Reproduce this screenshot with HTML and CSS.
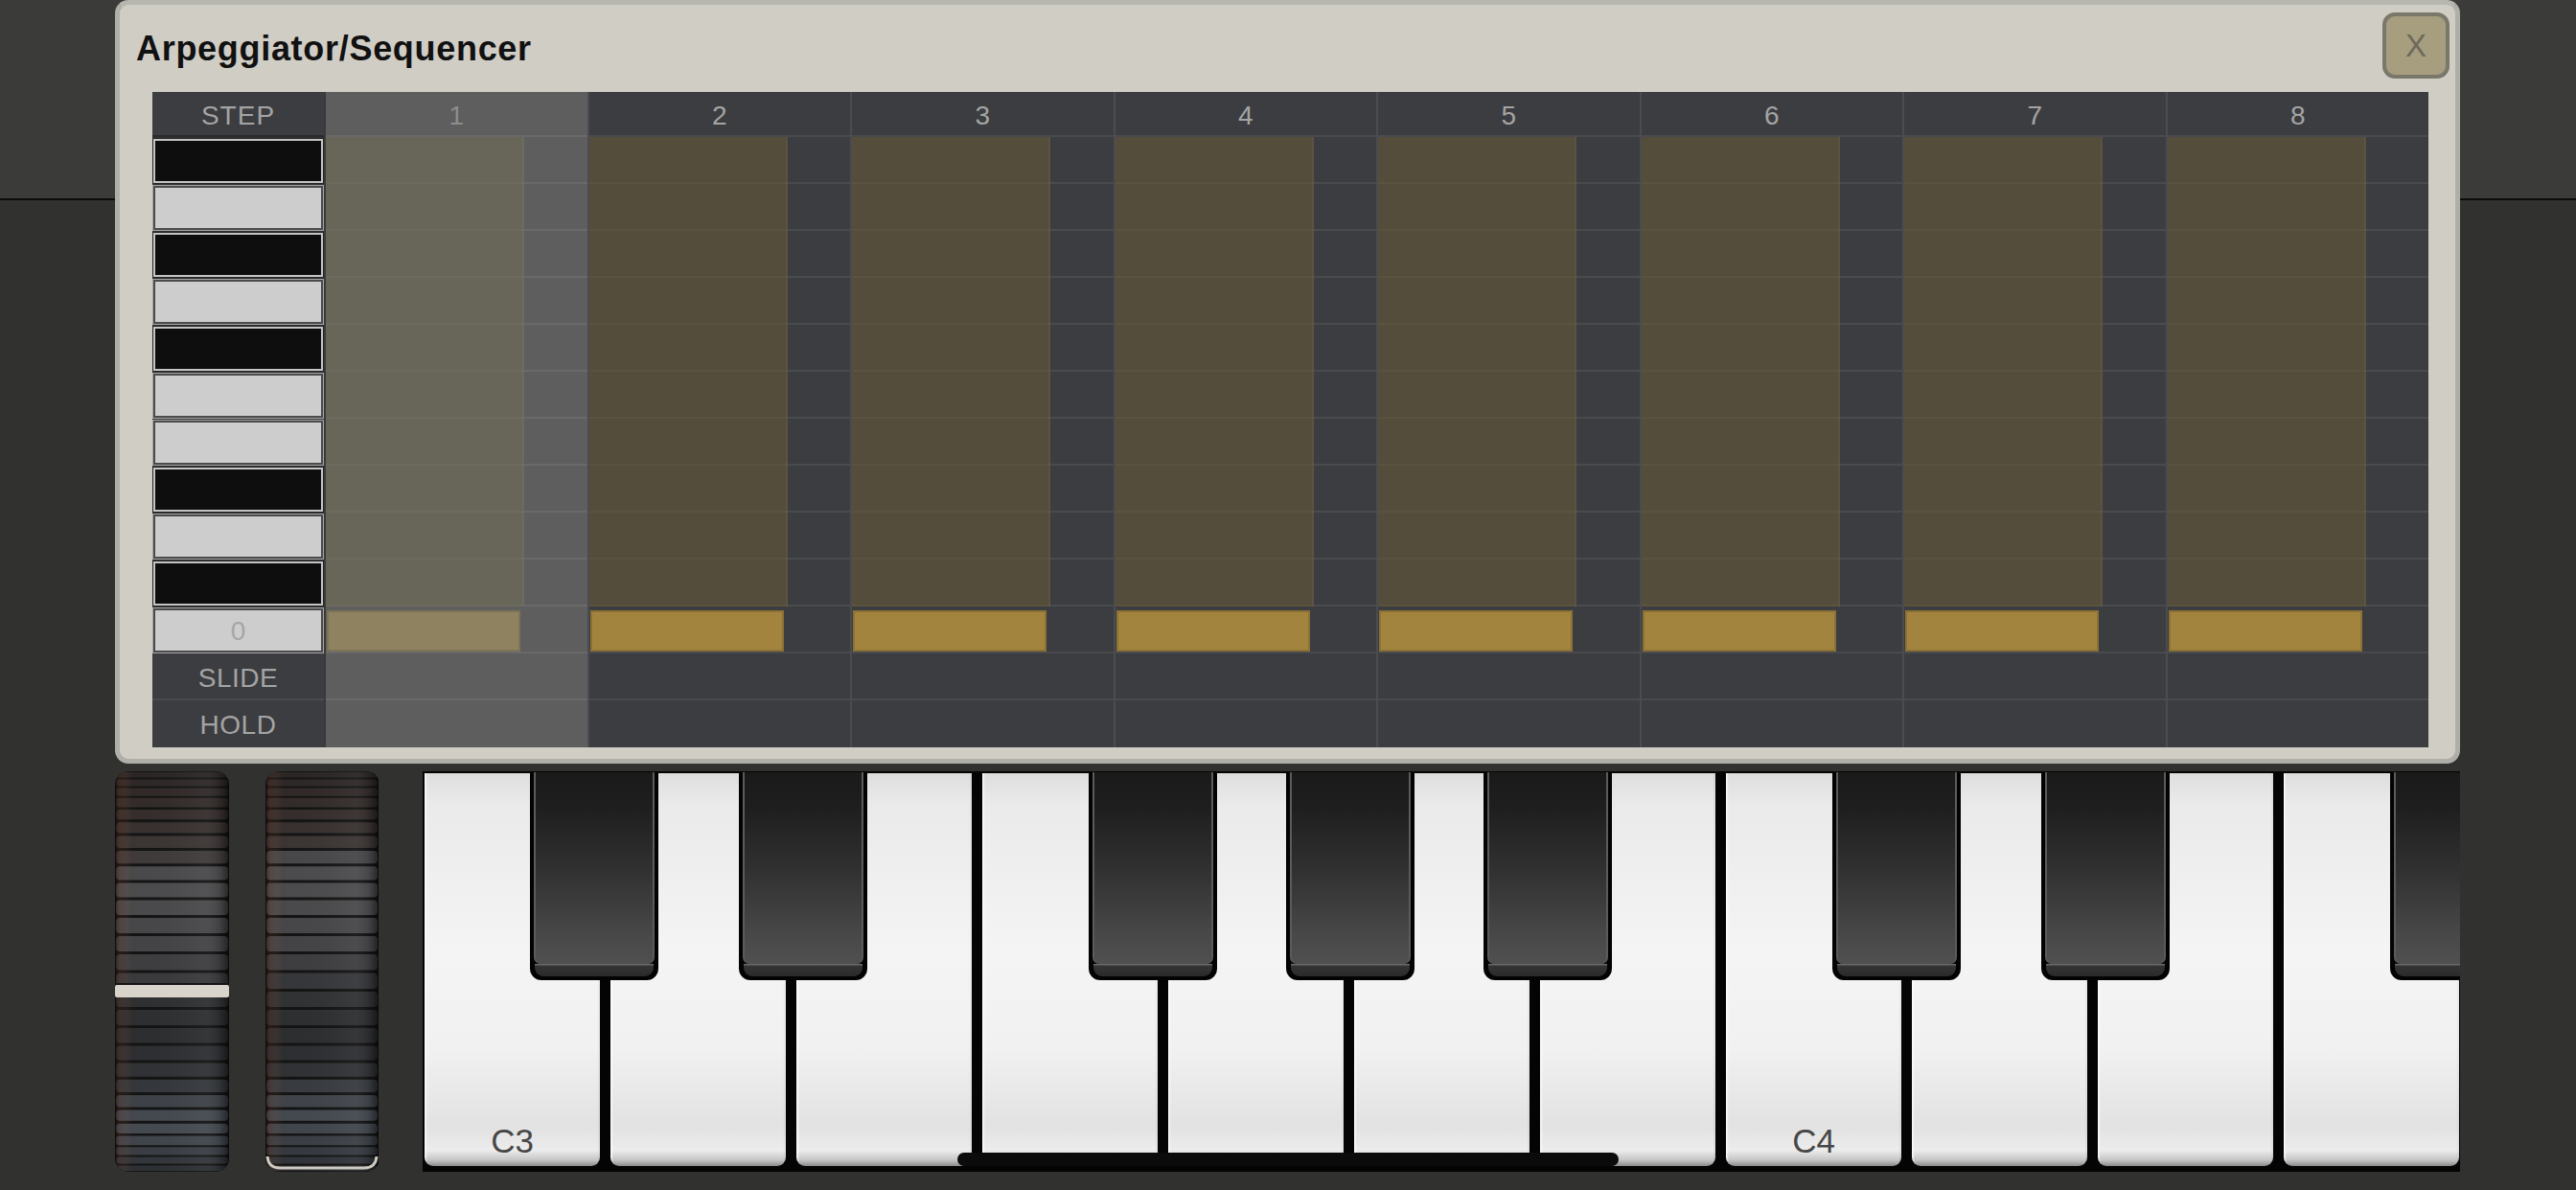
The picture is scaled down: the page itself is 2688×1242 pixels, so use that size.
FILE: index.html
```html
<!DOCTYPE html>
<html lang="en">
<head>
<meta charset="utf-8">
<title>Arpeggiator/Sequencer</title>
<link rel="stylesheet" href="styles.css">
</head>
<body>
<div class="app">
  <section class="dialog">
    <header class="dlg-head">
      <h1 class="dlg-title">Arpeggiator/Sequencer</h1>
      <button class="close" type="button">X</button>
    </header>
    <div class="grid">
      <div class="labels">
        <div class="lh">STEP</div>
        <div class="lk kb"></div>
        <div class="lk kw"></div>
        <div class="lk kb"></div>
        <div class="lk kw"></div>
        <div class="lk kb"></div>
        <div class="lk kw"></div>
        <div class="lk kw"></div>
        <div class="lk kb"></div>
        <div class="lk kw"></div>
        <div class="lk kb"></div>
        <div class="lk kw zero">0</div>
        <div class="ll">SLIDE</div>
        <div class="ll last">HOLD</div>
      </div>
      <div class="step cur">
        <div class="hd">1</div>
        <div class="notes"><div class="gate"></div></div>
        <div class="val"><div class="bar"></div></div>
        <div class="opt"></div>
        <div class="opt last"></div>
      </div>
      <div class="step">
        <div class="hd">2</div>
        <div class="notes"><div class="gate"></div></div>
        <div class="val"><div class="bar"></div></div>
        <div class="opt"></div>
        <div class="opt last"></div>
      </div>
      <div class="step">
        <div class="hd">3</div>
        <div class="notes"><div class="gate"></div></div>
        <div class="val"><div class="bar"></div></div>
        <div class="opt"></div>
        <div class="opt last"></div>
      </div>
      <div class="step">
        <div class="hd">4</div>
        <div class="notes"><div class="gate"></div></div>
        <div class="val"><div class="bar"></div></div>
        <div class="opt"></div>
        <div class="opt last"></div>
      </div>
      <div class="step">
        <div class="hd">5</div>
        <div class="notes"><div class="gate"></div></div>
        <div class="val"><div class="bar"></div></div>
        <div class="opt"></div>
        <div class="opt last"></div>
      </div>
      <div class="step">
        <div class="hd">6</div>
        <div class="notes"><div class="gate"></div></div>
        <div class="val"><div class="bar"></div></div>
        <div class="opt"></div>
        <div class="opt last"></div>
      </div>
      <div class="step">
        <div class="hd">7</div>
        <div class="notes"><div class="gate"></div></div>
        <div class="val"><div class="bar"></div></div>
        <div class="opt"></div>
        <div class="opt last"></div>
      </div>
      <div class="step">
        <div class="hd">8</div>
        <div class="notes"><div class="gate"></div></div>
        <div class="val"><div class="bar"></div></div>
        <div class="opt"></div>
        <div class="opt last"></div>
      </div>
    </div>
  </section>

  <div class="controls">
    <div class="wheel">
      <svg width="119" height="418" viewBox="0 0 119 418">
        <defs>
          <clipPath id="wclip"><rect x="0" y="0" width="119" height="418" rx="14"/></clipPath>
          <linearGradient id="wshade" x1="0" y1="0" x2="1" y2="0">
            <stop offset="0" stop-color="#000" stop-opacity="0.5"/>
            <stop offset="0.04" stop-color="#6a3420" stop-opacity="0.22"/>
            <stop offset="0.11" stop-color="#8a5a40" stop-opacity="0.1"/>
            <stop offset="0.2" stop-color="#000" stop-opacity="0"/>
            <stop offset="0.78" stop-color="#fff" stop-opacity="0.04"/>
            <stop offset="0.92" stop-color="#000" stop-opacity="0.1"/>
            <stop offset="1" stop-color="#000" stop-opacity="0.5"/>
          </linearGradient>
        </defs>
        <g clip-path="url(#wclip)">
          <rect x="0" y="0" width="119" height="418" fill="#141414"/>
          <rect x="1" y="1" width="117" height="5.4" rx="3" fill="#2c2626"/>
          <rect x="1" y="8.4" width="117" height="7" rx="3" fill="#2f2828"/>
          <rect x="1" y="17.4" width="117" height="8.4" rx="3" fill="#312a29"/>
          <rect x="1" y="27.8" width="117" height="9.8" rx="3" fill="#332c2b"/>
          <rect x="1" y="40.1" width="117" height="10.1" rx="4" fill="#352e2d"/>
          <rect x="1" y="53.2" width="117" height="11.3" rx="4" fill="#383130"/>
          <rect x="1" y="67.5" width="117" height="12.4" rx="4" fill="#3b3534"/>
          <rect x="1" y="82.9" width="117" height="13.4" rx="4" fill="#403b3b"/>
          <rect x="1" y="99.3" width="117" height="14.2" rx="4" fill="#4a4a4c"/>
          <rect x="1" y="116.5" width="117" height="14.9" rx="4" fill="#4c4c4e"/>
          <rect x="1" y="134.4" width="117" height="15.5" rx="4" fill="#4a4a4c"/>
          <rect x="1" y="152.9" width="117" height="16" rx="4" fill="#47474a"/>
          <rect x="1" y="171.9" width="117" height="16.2" rx="4" fill="#444447"/>
          <rect x="1" y="191.1" width="117" height="16.4" rx="4" fill="#3e3e41"/>
          <rect x="1" y="210.5" width="117" height="16.4" rx="4" fill="#3a3a3d"/>
          <rect x="1" y="229.9" width="117" height="16.2" rx="4" fill="#2f3032"/>
          <rect x="1" y="249.1" width="117" height="16" rx="4" fill="#2e2f31"/>
          <rect x="1" y="268.1" width="117" height="15.5" rx="4" fill="#2d2e30"/>
          <rect x="1" y="286.6" width="117" height="14.9" rx="4" fill="#2e2f32"/>
          <rect x="1" y="304.5" width="117" height="14.2" rx="4" fill="#303235"/>
          <rect x="1" y="321.7" width="117" height="13.4" rx="4" fill="#34373b"/>
          <rect x="1" y="338.1" width="117" height="12.4" rx="4" fill="#3e4248"/>
          <rect x="1" y="353.5" width="117" height="11.3" rx="4" fill="#444950"/>
          <rect x="1" y="367.8" width="117" height="10.1" rx="4" fill="#454a51"/>
          <rect x="1" y="380.4" width="117" height="9.8" rx="3" fill="#40454c"/>
          <rect x="1" y="392.2" width="117" height="8.4" rx="3" fill="#3a3e44"/>
          <rect x="1" y="402.6" width="117" height="7" rx="3" fill="#33363b"/>
          <rect x="1" y="411.6" width="117" height="5.4" rx="3" fill="#2d3034"/>
          <rect x="0" y="0" width="119" height="418" fill="url(#wshade)"/>
          <rect x="0" y="221" width="119" height="3" fill="#151515"/>
          <rect x="0" y="223" width="119" height="13" rx="2" fill="#d8d4cc"/>
        </g>
      </svg>
    </div>
    <div class="wheel wheel2">
      <svg width="118" height="418" viewBox="0 0 118 418">
        <g clip-path="url(#wclip)">
          <rect x="0" y="0" width="118" height="418" fill="#141414"/>
          <rect x="1" y="1" width="116" height="5.4" rx="3" fill="#2c2626"/>
          <rect x="1" y="8.4" width="116" height="7" rx="3" fill="#2f2828"/>
          <rect x="1" y="17.4" width="116" height="8.4" rx="3" fill="#312a29"/>
          <rect x="1" y="27.8" width="116" height="9.8" rx="3" fill="#332c2b"/>
          <rect x="1" y="40.1" width="116" height="10.1" rx="4" fill="#352e2d"/>
          <rect x="1" y="53.2" width="116" height="11.3" rx="4" fill="#383130"/>
          <rect x="1" y="67.5" width="116" height="12.4" rx="4" fill="#3b3534"/>
          <rect x="1" y="82.9" width="116" height="13.4" rx="4" fill="#48484a"/>
          <rect x="1" y="99.3" width="116" height="14.2" rx="4" fill="#4c4c4e"/>
          <rect x="1" y="116.5" width="116" height="14.9" rx="4" fill="#4c4c4e"/>
          <rect x="1" y="134.4" width="116" height="15.5" rx="4" fill="#4a4a4c"/>
          <rect x="1" y="152.9" width="116" height="16" rx="4" fill="#47474a"/>
          <rect x="1" y="171.9" width="116" height="16.2" rx="4" fill="#444447"/>
          <rect x="1" y="191.1" width="116" height="16.4" rx="4" fill="#3e3e41"/>
          <rect x="1" y="210.5" width="116" height="16.4" rx="4" fill="#36373a"/>
          <rect x="1" y="229.9" width="116" height="16.2" rx="4" fill="#313234"/>
          <rect x="1" y="249.1" width="116" height="16" rx="4" fill="#2e2f31"/>
          <rect x="1" y="268.1" width="116" height="15.5" rx="4" fill="#2d2e30"/>
          <rect x="1" y="286.6" width="116" height="14.9" rx="4" fill="#2e2f32"/>
          <rect x="1" y="304.5" width="116" height="14.2" rx="4" fill="#303235"/>
          <rect x="1" y="321.7" width="116" height="13.4" rx="4" fill="#383b40"/>
          <rect x="1" y="338.1" width="116" height="12.4" rx="4" fill="#40444a"/>
          <rect x="1" y="353.5" width="116" height="11.3" rx="4" fill="#444950"/>
          <rect x="1" y="367.8" width="116" height="10.1" rx="4" fill="#41464d"/>
          <rect x="1" y="380.4" width="116" height="9.8" rx="3" fill="#3b3f45"/>
          <rect x="1" y="392.2" width="116" height="8.4" rx="3" fill="#363a40"/>
          <rect x="1" y="402.6" width="116" height="7" rx="3" fill="#31343a"/>
          <rect x="1" y="411.6" width="116" height="5.4" rx="3" fill="#2b2e33"/>
          <rect x="0" y="0" width="118" height="418" fill="url(#wshade)"/>
          <path d="M2,402 Q3,414 15,414 L103,414 Q115,414 116,402" fill="none" stroke="#cfcac2" stroke-width="3"/>
        </g>
      </svg>
    </div>

    <div class="keyboard">
      <div class="wk"><span class="wk-label">C3</span></div>
      <div class="wk"></div>
      <div class="wk"></div>
      <div class="wk"></div>
      <div class="wk"></div>
      <div class="wk"></div>
      <div class="wk"></div>
      <div class="wk"><span class="wk-label">C4</span></div>
      <div class="wk"></div>
      <div class="wk"></div>
      <div class="wk"></div>
      <div class="bk k-cs"></div>
      <div class="bk k-ds"></div>
      <div class="bk k-fs"></div>
      <div class="bk k-gs"></div>
      <div class="bk k-as"></div>
      <div class="bk k-cs2"></div>
      <div class="bk k-ds2"></div>
      <div class="bk k-fs2"></div>
    </div>
  </div>
</div>
<div class="home-bar"></div>
</body>
</html>
```

FILE: styles.css
```css
html, body {
  margin: 0;
  padding: 0;
}

body {
  width: 2688px;
  height: 1242px;
  overflow: hidden;
  position: relative;
  font-family: "Liberation Sans", Arial, sans-serif;
  background: linear-gradient(to bottom, #3b3b3a 0, #3b3b3a 207px, #0c0c0c 207px, #0c0c0c 209px, #313130 209px, #313130 100%);
}

.app {
  display: flex;
  flex-direction: column;
  padding-left: 120px;
}

/* ---------- dialog ---------- */
.dialog {
  width: 2447px;
  height: 797px;
  box-sizing: border-box;
  background: #d0cdc5;
  border: 5px solid #b0afa7;
  border-top-color: #b8b7af;
  border-radius: 14px;
  display: flex;
  flex-direction: column;
}

.dlg-head {
  height: 91px;
  display: flex;
  align-items: flex-start;
  justify-content: space-between;
  padding: 0 6px 0 17px;
}

.dlg-title {
  margin: 0;
  margin-top: 25px;
  font-family: "Liberation Sans", Arial, sans-serif;
  font-size: 36px;
  font-weight: 700;
  line-height: 42px;
  color: #111;
  letter-spacing: 0.7px;
}

.close {
  margin-top: 8px;
  width: 70px;
  height: 69px;
  box-sizing: border-box;
  border: 4px solid #7a776b;
  border-radius: 13px;
  background: #a79e80;
  color: #6e6a5b;
  font-family: "Liberation Sans", Arial, sans-serif;
  font-size: 33px;
  line-height: 1;
  padding: 0;
  display: flex;
  align-items: center;
  justify-content: center;
}

.grid {
  margin: 0 27px 0 34px;
  width: 2375px;
  height: 684px;
  display: flex;
  background: #3c3d40;
  color: #a4a4a4;
  font-size: 28px;
}

/* label column */
.labels {
  width: 179px;
  flex: none;
  display: flex;
  flex-direction: column;
  background: #303133;
}

.lh, .ll {
  background: #3c3d40;
  text-align: center;
  box-sizing: border-box;
}

.lh {
  height: 47px;
  padding-top: 4px;
  line-height: 41px;
  border-bottom: 2px solid #2a2b2d;
  letter-spacing: 1px;
}

.ll {
  height: 49px;
  padding-top: 4px;
  line-height: 43px;
  border-bottom: 2px solid #4a4b4e;
  letter-spacing: 0.5px;
}

.ll.last {
  border-bottom: 0;
}

.lk {
  height: 46px;
  margin: 2px 1px 1px 1px;
  box-sizing: border-box;
}

.kb {
  background: #0e0e0e;
  border: 2px solid #c5c5c5;
  box-shadow: 0 0 0 1px #262626;
}

.kw {
  background: #cdcdcd;
  border: 2px solid #4b4b4b;
  box-shadow: 0 0 0 1px #a5a5a5;
}

.zero {
  text-align: center;
  color: #a6a6a6;
  padding-top: 4px;
  line-height: 36px;
}

/* step columns */
.step {
  flex: 1 1 0;
  min-width: 0;
  display: flex;
  flex-direction: column;
  border-left: 2px solid #4b4c4f;
  background: #3c3d40;
}

.step.cur {
  background: #5e5e5e;
  border-left-color: #3a3a3a;
  color: #8d8d8d;
}

.hd {
  height: 47px;
  box-sizing: border-box;
  padding-top: 4px;
  line-height: 41px;
  text-align: center;
  border-bottom: 2px solid rgba(255, 255, 255, 0.07);
}

.notes {
  height: 490px;
  display: flex;
  background-image: repeating-linear-gradient(to bottom, transparent 0, transparent 47px, rgba(255, 255, 255, 0.07) 47px, rgba(255, 255, 255, 0.07) 49px);
}

.gate {
  width: 205px;
  background: rgba(102, 89, 57, 0.6);
  border-right: 2px solid rgba(255, 255, 255, 0.04);
}

.cur .gate {
  background: rgba(112, 106, 86, 0.6);
}

.val {
  height: 49px;
  box-sizing: border-box;
  padding-top: 4px;
  border-bottom: 2px solid rgba(255, 255, 255, 0.07);
}

.bar {
  width: 202px;
  height: 43px;
  margin-left: 1px;
  box-sizing: border-box;
  background: #a2843f;
  border: 2px solid #8b7234;
}

.cur .bar {
  background: #8f8260;
  border-color: #7e7455;
}

.opt {
  height: 49px;
  box-sizing: border-box;
  border-bottom: 2px solid rgba(255, 255, 255, 0.07);
}

.opt.last {
  border-bottom: 0;
}

/* ---------- controls ---------- */
.controls {
  margin-top: 8px;
  height: 418px;
  display: flex;
}

.wheel {
  width: 119px;
  height: 418px;
  flex: none;
}

.wheel svg {
  display: block;
}

.wheel2 {
  width: 118px;
  margin-left: 38px;
}

.keyboard {
  position: relative;
  margin-left: 46px;
  width: 2126px;
  height: 418px;
  box-sizing: border-box;
  padding: 2px 0 6px 2px;
  background: #040404;
  display: flex;
  gap: 11px;
  overflow: hidden;
}

.wk {
  flex: 0 0 183px;
  height: 410px;
  box-sizing: border-box;
  border-radius: 0 0 9px 9px;
  background:
    linear-gradient(to right, rgba(255,255,255,0.9) 0, rgba(255,255,255,0) 3px, rgba(255,255,255,0) calc(100% - 3px), rgba(0,0,0,0.06) 100%),
    linear-gradient(to bottom, #dedede 0, #eaeaea 8%, #f4f4f4 45%, #f1f1f1 70%, #e2e2e2 90%, #ececec 96%, #c4c4c4 98.5%, #8a8a8a 100%);
  display: flex;
  align-items: flex-end;
  justify-content: center;
  padding-bottom: 9px;
}

.wk-label {
  font-family: "Liberation Sans", Arial, sans-serif;
  font-size: 35px;
  line-height: 1;
  color: #474747;
}

.bk {
  position: absolute;
  top: 1px;
  width: 134px;
  height: 217px;
  background: #030303;
  border-radius: 0 0 12px 12px;
}

.bk::before {
  content: "";
  position: absolute;
  left: 4px;
  right: 4px;
  top: 0;
  bottom: 17px;
  background: linear-gradient(to bottom, #1a1a1a 0, #1e1e1e 18%, #303030 50%, #484848 85%, #505050 100%);
  border-left: 2px solid #5b5b5b;
  border-right: 2px solid #5b5b5b;
  border-radius: 0 0 7px 7px;
}

.bk::after {
  content: "";
  position: absolute;
  left: 5px;
  right: 5px;
  bottom: 4px;
  height: 13px;
  background: linear-gradient(to bottom, #6a6a6a 0, #6a6a6a 1px, #343434 2px, #2a2a2a 100%);
  border-radius: 0 0 9px 9px;
}

.k-cs { left: 112px; }
.k-ds { left: 330px; }
.k-fs { left: 695px; }
.k-gs { left: 901px; }
.k-as { left: 1107px; }
.k-cs2 { left: 1471px; }
.k-ds2 { left: 1689px; }
.k-fs2 { left: 2053px; }

.home-bar {
  position: absolute;
  left: 999px;
  top: 1203px;
  width: 690px;
  height: 14px;
  border-radius: 7px;
  background: #0b0b0b;
}
```
